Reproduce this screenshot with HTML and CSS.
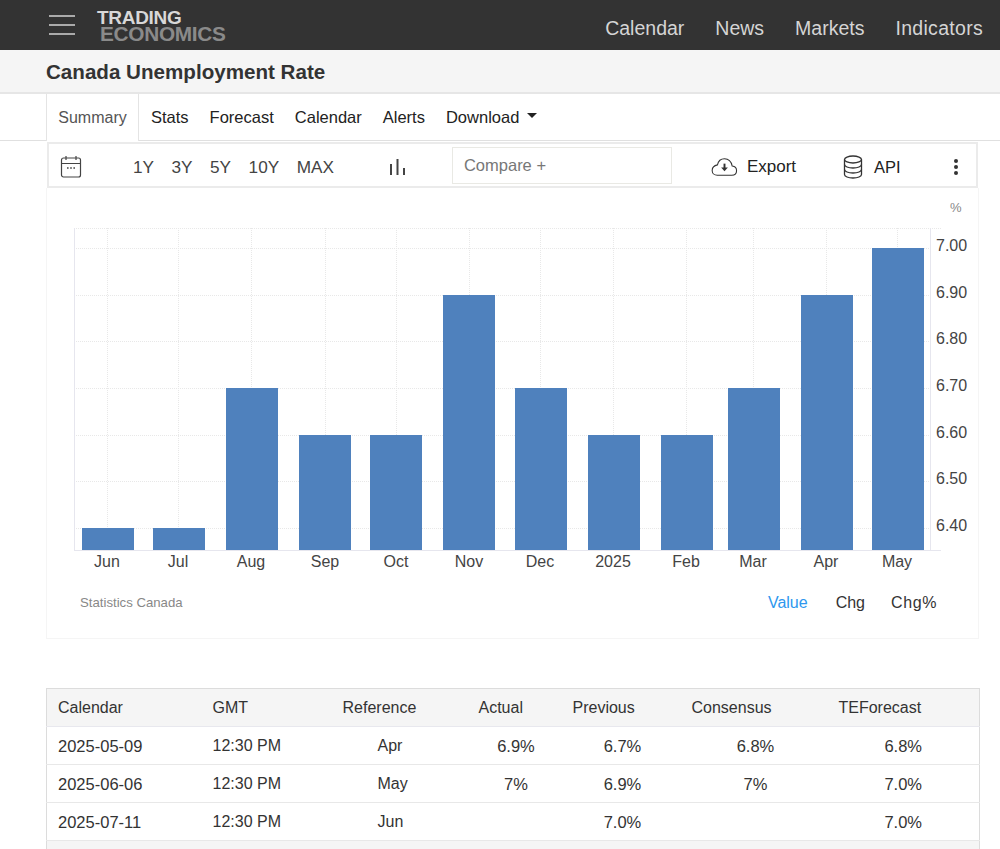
FILE: index.html
```html
<!DOCTYPE html>
<html lang="en">
<head>
<meta charset="utf-8">
<title>Canada Unemployment Rate</title>
<link rel="stylesheet" href="styles.css">
</head>
<body>
<header class="topbar">
  <div class="burger"><span></span><span></span><span></span></div>
  <div class="logo"><div class="logo-a">TRADING</div><div class="logo-b">ECONOMICS</div></div>
  <nav class="topnav"><a>Calendar</a><a>News</a><a>Markets</a><a class="last">Indicators</a></nav>
</header>
<div class="titlebar"><h1>Canada Unemployment Rate</h1></div>
<div class="tabs">
  <a class="tab active">Summary</a>
  <a class="tab">Stats</a>
  <a class="tab">Forecast</a>
  <a class="tab">Calendar</a>
  <a class="tab">Alerts</a>
  <a class="tab">Download<i class="caret"></i></a>
</div>
<main class="wrap">
  <div class="toolbar">
    <svg class="ico-cal" width="22" height="24" viewBox="0 0 22 24" fill="none" stroke="#444" stroke-width="1.2"><rect x="1.500" y="3" width="19" height="19" rx="2"/><path d="M1.500 8.500h19M6 1v4M16 1v4"/><path d="M7 13h1.600M10.200 13h1.600M13.400 13h1.600" stroke-width="1.600"/></svg>
    <div class="ranges"><span>1Y</span><span>3Y</span><span>5Y</span><span>10Y</span><span>MAX</span></div>
    <svg class="ico-bars" width="15" height="18" viewBox="0 0 15 18" fill="#444"><rect x="0" y="6" width="2" height="11"/><rect x="6.500" y="1" width="2" height="16"/><rect x="13" y="10" width="2" height="7"/></svg>
    <div class="compare">Compare +</div>
    <div class="tool export">
      <svg width="27" height="20" viewBox="0 0 28 20" fill="none" stroke="#333" stroke-width="1.100"><path d="M6.500 18.500H21.500C24.500 18.500 26.500 16.500 26.500 13.800C26.500 11.200 24.700 9.300 22 9C21 4.500 18 1.500 14 1.500C10 1.500 7.500 4 6.700 7.800C3.500 8.500 1.200 10.800 1.200 13.500C1.200 16.500 3.500 18.500 6.500 18.500Z"/><path d="M14 6.500v5" stroke-width="2"/><path d="M10.500 10.500h7L14 14.500z" fill="#333" stroke="none"/></svg>
      <span>Export</span>
    </div>
    <div class="tool api">
      <svg width="20" height="24" viewBox="0 0 20 24" fill="none" stroke="#333" stroke-width="1.300"><ellipse cx="10" cy="4.500" rx="8.500" ry="3.500"/><path d="M1.500 4.500v15c0 2 3.800 3.500 8.500 3.500s8.500-1.500 8.500-3.500v-15"/><path d="M1.500 9.500c0 2 3.800 3.500 8.500 3.500s8.500-1.500 8.500-3.500M1.500 14.500c0 2 3.800 3.500 8.500 3.500s8.500-1.500 8.500-3.500"/></svg>
      <span>API</span>
    </div>
    <div class="kebab"><i></i><i></i><i></i></div>
  </div>
  <section class="chart">
    <svg class="plot" width="931" height="400" viewBox="47 188 931 400">
      <g class="grid">
        <path d="M74 228.500H941M74 248.500H930M74 295.500H930M74 341.500H930M74 388.500H930M74 435.500H930M74 481.500H930M74 528.500H930"/>
        <path d="M107.500 228V550M178.500 228V550M251.500 228V550M325.500 228V550M396.500 228V550M469.500 228V550M540.500 228V550M613.500 228V550M686.500 228V550M753.500 228V550M826.500 228V550M897.500 228V550"/>
      </g>
      <path class="axis" d="M74 550.500H941M74.500 228V550M930.500 228V550"/>
      <g class="bars">
        <rect x="82" y="528" width="52" height="22"/>
        <rect x="153" y="528" width="52" height="22"/>
        <rect x="226" y="388" width="52" height="162"/>
        <rect x="299" y="435" width="52" height="115"/>
        <rect x="370" y="435" width="52" height="115"/>
        <rect x="443" y="295" width="52" height="255"/>
        <rect x="515" y="388" width="52" height="162"/>
        <rect x="588" y="435" width="52" height="115"/>
        <rect x="661" y="435" width="52" height="115"/>
        <rect x="728" y="388" width="52" height="162"/>
        <rect x="801" y="295" width="52" height="255"/>
        <rect x="872" y="248" width="52" height="302"/>
      </g>
      <g class="xlabels">
        <text x="107" y="567">Jun</text><text x="178" y="567">Jul</text><text x="251" y="567">Aug</text><text x="325" y="567">Sep</text><text x="396" y="567">Oct</text><text x="469" y="567">Nov</text><text x="540" y="567">Dec</text><text x="613" y="567">2025</text><text x="686" y="567">Feb</text><text x="753" y="567">Mar</text><text x="826" y="567">Apr</text><text x="897" y="567">May</text>
      </g>
      <g class="ylabels">
        <text x="936" y="251">7.00</text><text x="936" y="298">6.90</text><text x="936" y="344">6.80</text><text x="936" y="391">6.70</text><text x="936" y="438">6.60</text><text x="936" y="484">6.50</text><text x="936" y="531">6.40</text>
      </g>
      <text class="unit" x="950" y="212">%</text>
    </svg>
    <div class="chart-foot">
      <span class="source">Statistics Canada</span>
      <div class="modes"><span class="on">Value</span><span>Chg</span><span class="pct">Chg%</span></div>
    </div>
  </section>
  <table class="cal">
    <colgroup><col class="c1"><col class="c2"><col class="c3"><col class="c4"><col class="c5"><col class="c6"><col class="c7"></colgroup>
    <thead>
      <tr><th>Calendar</th><th>GMT</th><th>Reference</th><th>Actual</th><th>Previous</th><th>Consensus</th><th>TEForecast</th></tr>
    </thead>
    <tbody>
      <tr><td class="date">2025-05-09</td><td>12:30 PM</td><td class="ref">Apr</td><td class="num">6.9%</td><td class="num">6.7%</td><td class="num">6.8%</td><td class="num te">6.8%</td></tr>
      <tr><td class="date">2025-06-06</td><td>12:30 PM</td><td class="ref">May</td><td class="num">7%</td><td class="num">6.9%</td><td class="num">7%</td><td class="num te">7.0%</td></tr>
      <tr><td class="date">2025-07-11</td><td>12:30 PM</td><td class="ref">Jun</td><td class="num"></td><td class="num">7.0%</td><td class="num"></td><td class="num te">7.0%</td></tr>
      <tr class="more"><td colspan="7"></td></tr>
    </tbody>
  </table>
</main>
</body>
</html>
```
FILE: styles.css
```css
* { box-sizing: border-box; }
html, body { margin: 0; height: 849px; overflow: hidden; background: #fff; }
body { font-family: "Liberation Sans", Arial, sans-serif; color: #333; }

.topbar { height: 50px; background: #333; display: flex; align-items: center; padding-left: 49px; padding-right: 17px; }
.burger { width: 26px; display: flex; flex-direction: column; gap: 7px; }
.burger span { height: 2px; background: #aaa; }
.logo { margin-left: 22px; font-weight: 700; font-size: 19px; line-height: 15.500px; letter-spacing: -0.3px; padding-top: 1px; }
.logo-a { color: #d8d8d8; }
.logo-b { color: #8a8a8a; font-size: 20.800px; margin-left: 3px; }
.topnav { margin-left: auto; padding-top: 6px; display: flex; gap: 31px; font-size: 19.500px; color: #d5d5d5; }
.topnav .last { letter-spacing: 0.3px; }

.titlebar { height: 44px; background: #f5f5f5; border-bottom: 2px solid #e6e6e6; padding: 2px 0 0 46px; display: flex; align-items: center; }
.titlebar h1 { margin: 0; font-size: 20.600px; font-weight: 700; color: #333; }

.tabs { height: 47px; display: flex; align-items: stretch; padding-left: 46px; border-bottom: 1px solid #e0e0e0; font-size: 16.500px; color: #222; }
.tab { display: flex; align-items: center; padding: 0 10.500px; }
.tab.active { width: 93px; font-size: 16px; color: #555; justify-content: center; padding: 0; margin-bottom: -1px; background: #fff; border-left: 1px solid #e4e4e4; border-right: 1px solid #e4e4e4; margin-right: 1.500px; }
.caret { display: inline-block; margin-left: 8px; margin-bottom: 4px; border-left: 5.500px solid transparent; border-right: 5.500px solid transparent; border-top: 5px solid #222; }

.wrap { width: 933px; margin-left: 46px; }
.toolbar { height: 46px; margin: 1px 1px 0 1px; padding-top: 4px; border: 2px solid #ebebeb; display: flex; align-items: center; background: #fff; position: relative; z-index: 1; }
.ico-cal { margin-left: 11px; }
.ranges { margin-left: 51px; display: flex; gap: 17.500px; font-size: 17.200px; color: #444; }
.ico-bars { margin-left: 56px; }
.compare { margin-left: 47px; width: 220px; height: 37px; border: 1px solid #e9e9e4; display: flex; align-items: center; padding-left: 11px; font-size: 16.500px; color: #777; margin-top: -3px; }
.tool { display: flex; align-items: center; font-size: 17px; color: #222; }
.export { margin-left: 39px; gap: 9px; }
.api { margin-left: 47px; gap: 11px; font-size: 16.500px; }
.kebab { margin-left: 53px; display: flex; flex-direction: column; gap: 2px; }
.kebab i { width: 4px; height: 4px; border-radius: 50%; background: #333; display: block; }

.chart { width: 933px; height: 451px; border: 1px solid #f5f5f5; border-top: 0; }
.plot { display: block; }
.grid path { fill: none; stroke: #e8e8e8; stroke-width: 1; stroke-dasharray: 1 1; }
.axis { fill: none; stroke: #e6e6ee; stroke-width: 1; }
.bars rect { fill: #4f81bd; }
.xlabels text { font-size: 16px; fill: #444; text-anchor: middle; }
.ylabels text { font-size: 16px; fill: #444; }
.unit { font-size: 13px; fill: #888; }

.chart-foot { display: flex; align-items: center; padding: 0 41px 0 33px; margin-top: 6px; }
.source { font-size: 13.200px; color: #888; margin-top: -2px; }
.modes { margin-left: auto; display: flex; gap: 28px; font-size: 16px; color: #333; }
.modes .on { color: #2e97ee; }
.modes .pct { letter-spacing: 0.6px; margin-left: -2px; }

.cal { width: 933px; margin-top: 49px; border-collapse: collapse; table-layout: fixed; font-size: 16px; color: #333; border: 1px solid #dcdcdc; border-bottom: 0; }
.c1 { width: 155px; } .c2 { width: 130px; } .c3 { width: 136px; } .c4 { width: 94px; } .c5 { width: 119px; } .c6 { width: 147px; } .c7 { width: 152px; }
.cal th { height: 38px; font-weight: 400; text-align: left; padding: 0 0 0 11px; background: #f5f5f5; border-bottom: 1px solid #e8e8ee; white-space: nowrap; }
.cal td { height: 38px; padding: 1px 0 0 11px; border-bottom: 1px solid #e8e8e8; white-space: nowrap; }
.cal td.date { font-size: 16.500px; }
.cal td.ref { padding-left: 46px; }
.cal td.num { font-size: 16.500px; text-align: center; padding: 1px 0 0 3px; }
.cal td.te { padding: 1px 0 0; }
.more td { background: #f5f5f5; height: 20px; border-bottom: 0; }
```
